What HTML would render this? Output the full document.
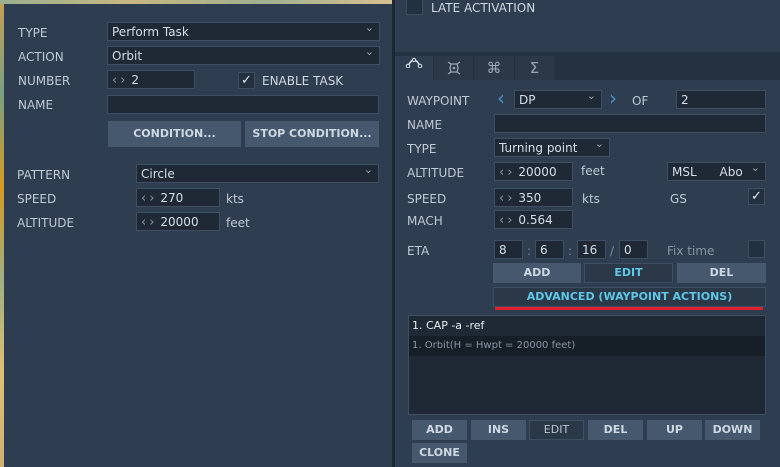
<html><head><style>
*{box-sizing:border-box;margin:0;padding:0}
body{width:780px;height:467px;overflow:hidden;background:#2e3d4f;font-family:"DejaVu Sans","Liberation Sans",sans-serif;font-size:12px;color:#c5cfda;position:relative}
.a{position:absolute}
.in{position:absolute;background:#1f2936;border:1px solid #3e4f63;color:#d6dde6;padding-left:4px;line-height:18px;white-space:nowrap;overflow:hidden}
.dd::after{content:"⌄";position:absolute;right:5px;top:-4px;color:#9aa6b3;font-size:11px}
.lb{position:absolute;line-height:14px;color:#c0cad5}
.sp{color:#8794a3;margin-right:3px;letter-spacing:3px;font-size:13px}
.bt{position:absolute;background:#45586e;color:#cfd8e2;font-weight:bold;text-align:center;font-size:11px}
.bt.d{background:#2a3848;border:1px solid #3e4f63}
.cb{position:absolute;background:#223040;border:1px solid #3e4f63;color:#e6ecf2;text-align:center;font-size:13px;line-height:15px}
.tab{position:absolute;top:56px;height:24px;background:#2a3848;text-align:center;line-height:24px;color:#9aa6b3;font-size:15px}
</style></head><body>
<div class="a" style="left:0;top:0;width:4px;height:467px;background:linear-gradient(#c8a050,#7aa080,#d99a20,#a0b080,#e0c070,#d0b070)"></div>
<div class="a" style="left:0;top:0;width:392px;height:4px;background:linear-gradient(90deg,#9ab090,#c8b880,#a0b090,#d8c090)"></div>
<div class="a" style="left:392px;top:0;width:3px;height:467px;background:#1d2835"></div>

<div class="lb" style="left:18px;top:26px">TYPE</div>
<div class="in dd" style="left:107px;top:22px;width:273px;height:19px">Perform Task</div>
<div class="lb" style="left:18px;top:50px">ACTION</div>
<div class="in dd" style="left:107px;top:46px;width:273px;height:19px">Orbit</div>
<div class="lb" style="left:18px;top:74px">NUMBER</div>
<div class="in" style="left:107px;top:70px;width:88px;height:19px"><span class="sp">‹›</span>2</div>
<div class="cb" style="left:238px;top:72px;width:17px;height:17px">✓</div>
<div class="lb" style="left:262px;top:74px;color:#d0d8e0">ENABLE TASK</div>
<div class="lb" style="left:18px;top:98px">NAME</div>
<div class="in" style="left:107px;top:95px;width:272px;height:19px"></div>
<div class="bt" style="left:108px;top:121px;width:133px;height:26px;line-height:26px">CONDITION...</div>
<div class="bt" style="left:245px;top:121px;width:134px;height:26px;line-height:26px">STOP CONDITION...</div>
<div class="lb" style="left:17px;top:168px">PATTERN</div>
<div class="in dd" style="left:136px;top:164px;width:243px;height:19px">Circle</div>
<div class="lb" style="left:17px;top:192px">SPEED</div>
<div class="in" style="left:136px;top:188px;width:84px;height:19px"><span class="sp">‹›</span>270</div>
<div class="lb" style="left:226px;top:192px">kts</div>
<div class="lb" style="left:17px;top:216px">ALTITUDE</div>
<div class="in" style="left:136px;top:212px;width:84px;height:19px"><span class="sp">‹›</span>20000</div>
<div class="lb" style="left:226px;top:216px">feet</div>

<div class="cb" style="left:406px;top:0;width:17px;height:15px;border-top:none"></div>
<div class="lb" style="left:431px;top:1px;color:#d0d8e0">LATE ACTIVATION</div>
<div class="a" style="left:395px;top:52px;width:385px;height:28px;background:#243141"></div>
<div class="a" style="left:395px;top:56px;width:38px;height:24px;background:#2e3d4f;text-align:center;line-height:26px">
<svg width="18" height="12" viewBox="0 0 18 12"><path d="M3 10 Q9 -2 15 10" fill="none" stroke="#dde3ea" stroke-width="1.4"/><circle cx="3" cy="10" r="1.8" fill="#2e3d4f" stroke="#dde3ea"/><circle cx="15" cy="10" r="1.8" fill="#2e3d4f" stroke="#dde3ea"/><circle cx="9" cy="4" r="1.6" fill="#2e3d4f" stroke="#dde3ea"/></svg></div>
<div class="tab" style="left:434px;width:39px"><svg width="14" height="14" viewBox="0 0 14 14" style="margin-top:5px"><path d="M1 1 L4 3 L10 3 L13 1 M1 13 L4 11 L10 11 L13 13 M4 3 L3 7 L4 11 M10 3 L11 7 L10 11" fill="none" stroke="#9aa6b3" stroke-width="1.3"/><circle cx="7" cy="7" r="1.3" fill="#9aa6b3"/></svg></div>
<div class="tab" style="left:474px;width:40px">⌘</div>
<div class="tab" style="left:515px;width:39px">Σ</div>

<div class="lb" style="left:407px;top:94px">WAYPOINT</div>
<div class="lb" style="left:497px;top:88px;color:#4c8fd0;font-size:20px;line-height:20px">‹</div>
<div class="in dd" style="left:514px;top:90px;width:88px;height:19px">DP</div>
<div class="lb" style="left:609px;top:88px;color:#4c8fd0;font-size:20px;line-height:20px">›</div>
<div class="lb" style="left:632px;top:94px">OF</div>
<div class="in" style="left:676px;top:90px;width:90px;height:19px">2</div>
<div class="lb" style="left:407px;top:118px">NAME</div>
<div class="in" style="left:494px;top:114px;width:272px;height:19px"></div>
<div class="lb" style="left:407px;top:142px">TYPE</div>
<div class="in dd" style="left:494px;top:138px;width:116px;height:19px">Turning point</div>
<div class="lb" style="left:407px;top:166px">ALTITUDE</div>
<div class="in" style="left:494px;top:162px;width:79px;height:19px"><span class="sp">‹›</span>20000</div>
<div class="lb" style="left:581px;top:164px">feet</div>
<div class="in dd" style="left:667px;top:162px;width:99px;height:19px">MSL&nbsp;&nbsp;&nbsp;&nbsp;&nbsp;&nbsp;Abo</div>
<div class="lb" style="left:407px;top:192px">SPEED</div>
<div class="in" style="left:494px;top:188px;width:79px;height:19px"><span class="sp">‹›</span>350</div>
<div class="lb" style="left:582px;top:192px">kts</div>
<div class="lb" style="left:670px;top:192px">GS</div>
<div class="cb" style="left:748px;top:188px;width:17px;height:17px">✓</div>
<div class="lb" style="left:407px;top:214px">MACH</div>
<div class="in" style="left:494px;top:210px;width:79px;height:19px"><span class="sp">‹›</span>0.564</div>
<div class="lb" style="left:407px;top:244px">ETA</div>
<div class="in" style="left:494px;top:240px;width:29px;height:19px">8</div>
<div class="lb" style="left:527px;top:244px;color:#7d8a99">:</div>
<div class="in" style="left:535px;top:240px;width:29px;height:19px">6</div>
<div class="lb" style="left:568px;top:244px;color:#7d8a99">:</div>
<div class="in" style="left:577px;top:240px;width:29px;height:19px">16</div>
<div class="lb" style="left:610px;top:244px;color:#7d8a99">/</div>
<div class="in" style="left:619px;top:240px;width:29px;height:19px">0</div>
<div class="lb" style="left:667px;top:244px;color:#8995a3">Fix time</div>
<div class="cb" style="left:748px;top:240px;width:17px;height:18px"></div>
<div class="bt" style="left:493px;top:263px;width:88px;height:20px;line-height:20px">ADD</div>
<div class="bt d" style="left:584px;top:263px;width:89px;height:20px;line-height:18px;color:#5fc8e8">EDIT</div>
<div class="bt" style="left:677px;top:263px;width:89px;height:20px;line-height:20px">DEL</div>
<div class="bt d" style="left:493px;top:287px;width:273px;height:20px;line-height:18px;color:#5fc8e8">ADVANCED (WAYPOINT ACTIONS)</div>
<div class="a" style="left:495px;top:307px;width:268px;height:3px;background:#e0202a;border-radius:1px"></div>
<div class="a" style="left:408px;top:315px;width:358px;height:100px;background:#1f2936;border:1px solid #3e4f63"></div>
<div class="lb" style="left:412px;top:319px;color:#e6ebf0;font-size:11px">1. CAP -a -ref</div>
<div class="a" style="left:409px;top:336px;width:356px;height:20px;background:#161e28"></div>
<div class="lb" style="left:412px;top:339px;color:#8a96a4;font-size:10px">1. Orbit(H = Hwpt = 20000 feet)</div>
<div class="bt" style="left:412px;top:420px;width:55px;height:20px;line-height:20px">ADD</div>
<div class="bt" style="left:471px;top:420px;width:55px;height:20px;line-height:20px">INS</div>
<div class="bt d" style="left:529px;top:420px;width:55px;height:20px;line-height:18px;color:#b8c2cd;font-weight:normal">EDIT</div>
<div class="bt" style="left:588px;top:420px;width:55px;height:20px;line-height:20px">DEL</div>
<div class="bt" style="left:647px;top:420px;width:55px;height:20px;line-height:20px">UP</div>
<div class="bt" style="left:705px;top:420px;width:55px;height:20px;line-height:20px">DOWN</div>
<div class="bt" style="left:412px;top:443px;width:55px;height:20px;line-height:20px">CLONE</div>
</body></html>
